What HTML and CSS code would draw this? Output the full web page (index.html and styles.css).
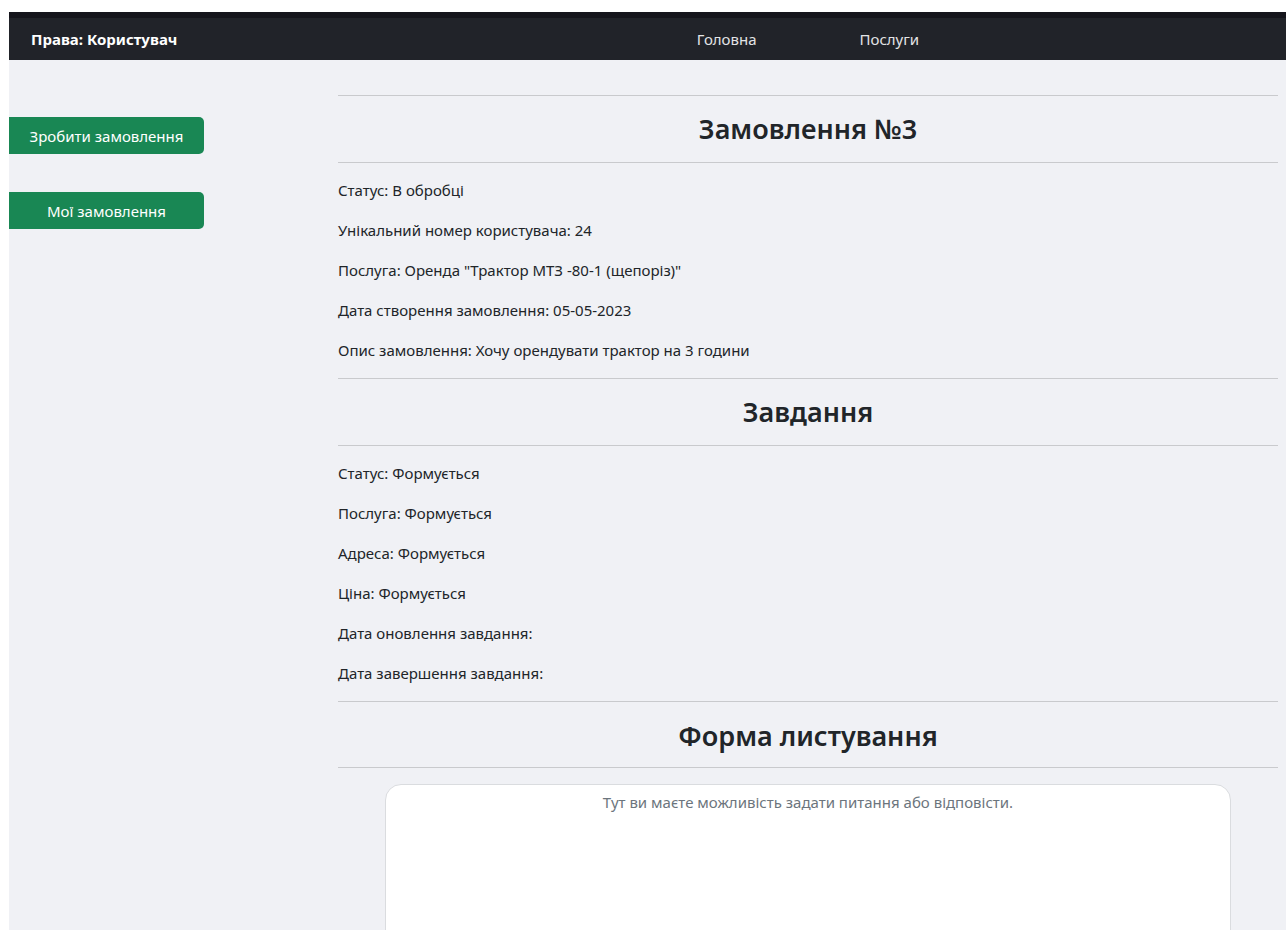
FILE: index.html
```html
<!DOCTYPE html>
<html lang="uk">
<head>
<meta charset="utf-8">
<title>Замовлення №3</title>
<link rel="stylesheet" href="styles.css">
</head>
<body>
<div class="page">
  <header class="navbar">
    <div class="brand">Права: Користувач</div>
    <nav class="nav-links">
      <a href="#" class="nav-link">Головна</a>
      <a href="#" class="nav-link">Послуги</a>
    </nav>
  </header>
  <div class="layout">
    <aside class="sidebar">
      <a href="#" class="btn-side">Зробити замовлення</a>
      <a href="#" class="btn-side">Мої замовлення</a>
    </aside>
    <main class="content">
      <section class="block">
        <hr class="rule">
        <h2 class="block-title">Замовлення №3</h2>
        <hr class="rule">
        <div class="fields">
          <p>Статус: В обробці</p>
          <p>Унікальний номер користувача: 24</p>
          <p>Послуга: Оренда "Трактор МТЗ -80-1 (щепоріз)"</p>
          <p>Дата створення замовлення: 05-05-2023</p>
          <p>Опис замовлення: Хочу орендувати трактор на 3 години</p>
        </div>
      </section>
      <section class="block">
        <hr class="rule">
        <h2 class="block-title">Завдання</h2>
        <hr class="rule">
        <div class="fields">
          <p>Статус: Формується</p>
          <p>Послуга: Формується</p>
          <p>Адреса: Формується</p>
          <p>Ціна: Формується</p>
          <p>Дата оновлення завдання:</p>
          <p>Дата завершення завдання:</p>
        </div>
      </section>
      <section class="block">
        <hr class="rule">
        <h2 class="block-title">Форма листування</h2>
        <hr class="rule">
        <div class="chat">
          <textarea class="chat-box" placeholder="Тут ви маєте можливість задати питання або відповісти."></textarea>
        </div>
      </section>
    </main>
  </div>
</div>
</body>
</html>
```

FILE: styles.css
```css
html, body {
  margin: 0;
  padding: 0;
  background: #ffffff;
}

body {
  font-family: "Noto Sans", "Open Sans", sans-serif;
  color: #212529;
  padding: 12px 0 0 9px;
}

.page {
  background: #f0f1f5;
  min-height: 918px;
}

.navbar {
  display: grid;
  grid-template-columns: 329px 1fr;
  align-items: center;
  height: 42px;
  background: #212329;
  border-top: 6px solid #15151c;
}

.brand {
  padding-left: 22px;
  color: #ffffff;
  font-weight: 700;
  font-size: 15px;
}

.nav-links {
  display: flex;
  justify-content: center;
  gap: 103px;
  padding-right: 8px;
}

.nav-link {
  color: #e3e4e6;
  text-decoration: none;
  font-size: 15px;
}

.layout {
  display: flex;
}

.sidebar {
  width: 329px;
  flex: none;
  display: flex;
  flex-direction: column;
  gap: 38px;
  padding-top: 57px;
}

.btn-side {
  display: flex;
  align-items: center;
  justify-content: center;
  width: 195px;
  height: 37px;
  box-sizing: border-box;
  background: #198754;
  color: #ffffff;
  text-decoration: none;
  font-size: 15px;
  border-radius: 0 5px 5px 0;
}

.content {
  flex: 1;
  padding: 35px 8px 0 0;
  min-width: 0;
}

.rule {
  margin: 0;
  border: 0;
  border-top: 1px solid #c9cacd;
}

.block-title {
  margin: 0;
  padding: 16px 0;
  line-height: 34px;
  font-size: 27px;
  font-weight: 600;
  text-align: center;
  color: #212529;
}

.block:last-child .block-title {
  padding: 17px 0 14px;
}

.fields {
  padding-top: 15px;
}

.fields p {
  margin: 0 0 16px;
  font-size: 15px;
  line-height: 24px;
}

.chat {
  padding-top: 16px;
}

.chat-box {
  display: block;
  width: 90%;
  height: 200px;
  margin: 0 auto;
  box-sizing: border-box;
  padding: 7px 12px;
  border: 1px solid #dadcdf;
  border-radius: 16px;
  background: #ffffff;
  font-family: inherit;
  font-size: 15px;
  text-align: center;
  resize: none;
  outline: none;
}

.chat-box::placeholder {
  color: #6c757d;
}
```
